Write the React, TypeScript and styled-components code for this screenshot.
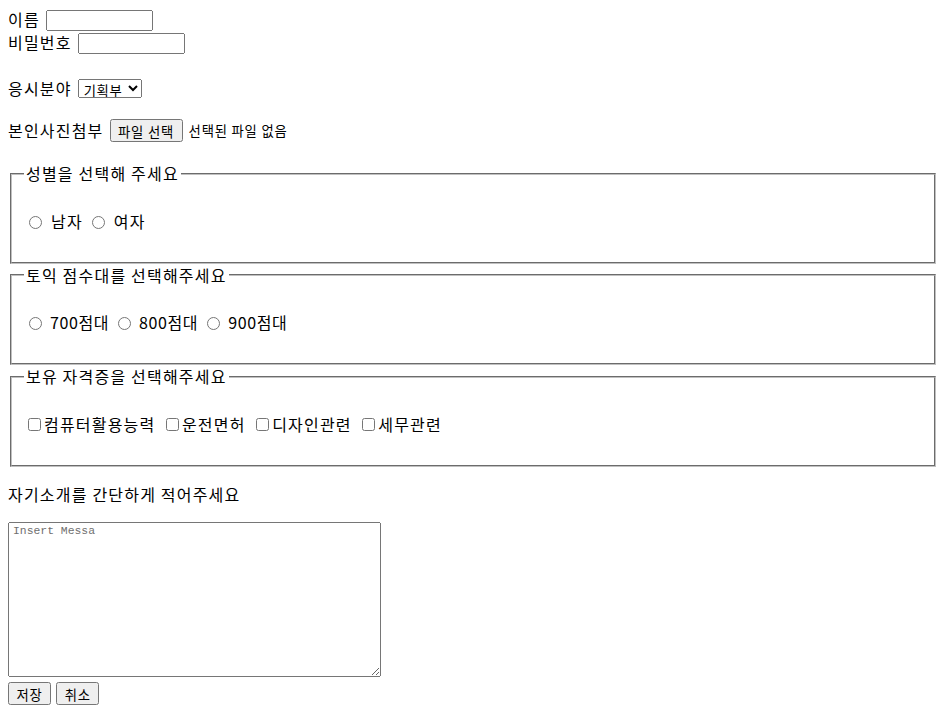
import React from "react";
import styled, { createGlobalStyle } from "styled-components";

const GlobalStyle = createGlobalStyle`
  body {
    margin: 8px;
    font-family: "Noto Sans CJK KR", "Noto Sans", sans-serif;
    font-size: 16px;
    letter-spacing: 1.2px;
    color: #000;
    background: #fff;
  }
`;

const Form = styled.form`
  display: flex;
  flex-direction: column;
`;

const Row = styled.div<{ $top?: number; $h?: number }>`
  display: flex;
  align-items: center;
  gap: 6px;
  height: ${(p) => p.$h ?? 23}px;
  margin-top: ${(p) => p.$top ?? 0}px;
  line-height: 23px;
`;

const TextInput = styled.input`
  box-sizing: border-box;
  width: 107px;
  height: 21px;
  margin: 2px 0 0 0;
  font-family: "Noto Sans CJK KR", sans-serif;
  font-size: 13.33px;
`;

const Select = styled.select`
  box-sizing: border-box;
  width: 64px;
  height: 19px;
  margin: 0;
  padding: 0 0 0 1px;
  font-family: "Noto Sans CJK KR", sans-serif;
  font-size: 13.33px;
  letter-spacing: 0.6px;
  line-height: 17px;
`;

const Button = styled.button`
  box-sizing: border-box;
  height: 23px;
  margin: 0;
  padding: 1px 6.5px;
  font-family: "Noto Sans CJK KR", sans-serif;
  font-size: 13.33px;
  letter-spacing: 0.8px;
  line-height: 19px;
  color: #000;
`;

const FileNote = styled.span`
  font-size: 13.33px;
  letter-spacing: 0.8px;
`;

const Fieldset = styled.fieldset<{ $top?: number }>`
  margin: ${(p) => p.$top ?? 0}px 2px 0 2px;
  padding: 0.35em 0.75em 0.625em;
  border: 2px groove rgb(192, 192, 192);
  min-width: 0;
`;

const Legend = styled.legend`
  padding: 0 2px;
  line-height: 23px;
`;

const Options = styled.div<{ $gap: number }>`
  display: flex;
  align-items: center;
  height: 61px;
  gap: ${(p) => p.$gap}px;
  line-height: 23px;
`;

const Choice = styled.label`
  display: inline-flex;
  align-items: center;
`;

const Radio = styled.input.attrs({ type: "radio" })`
  width: 13px;
  height: 13px;
  margin: 2px 3px 0 5px;
`;

const Check = styled.input.attrs({ type: "checkbox" })`
  width: 13px;
  height: 13px;
  margin: 3px 3px 3px 4px;
`;

const ChoiceText = styled.span<{ $gap?: number; $tight?: boolean }>`
  margin-left: ${(p) => p.$gap ?? 0}px;
  letter-spacing: ${(p) => (p.$tight ? "0.6px" : "inherit")};
`;

const Intro = styled.p`
  margin: 16px 0;
  line-height: 23px;
`;

const TextArea = styled.textarea`
  box-sizing: border-box;
  width: 373px;
  height: 155px;
  margin: 0;
  padding: 2px 4px;
  font-family: "Liberation Mono", monospace;
  font-size: 11.4px;
  letter-spacing: 0;
  &::placeholder {
    color: #6f6f6f;
  }
`;

const Actions = styled.div`
  display: flex;
  gap: 5px;
  margin-top: 5px;
`;

export default function App() {
  return (
    <>
      <GlobalStyle />
      <Form onSubmit={(e) => e.preventDefault()}>
        <Row>
          이름 <TextInput type="text" />
        </Row>
        <Row>
          비밀번호 <TextInput type="text" />
        </Row>
        <Row $top={23}>
          응시분야
          <Select defaultValue="기획부">
            <option>기획부</option>
            <option>영업부</option>
            <option>개발부</option>
          </Select>
        </Row>
        <Row $top={18} $h={24}>
          본인사진첨부
          <Button type="button">파일 선택</Button>
          <FileNote>선택된 파일 없음</FileNote>
        </Row>

        <Fieldset $top={20}>
          <Legend>성별을 선택해 주세요</Legend>
          <Options $gap={4}>
            <Choice>
              <Radio name="gender" />
              <ChoiceText $gap={6}>남자</ChoiceText>
            </Choice>
            <Choice>
              <Radio name="gender" />
              <ChoiceText $gap={6}>여자</ChoiceText>
            </Choice>
          </Options>
        </Fieldset>

        <Fieldset>
          <Legend>토익 점수대를 선택해주세요</Legend>
          <Options $gap={4}>
            <Choice>
              <Radio name="toeic" />
              <ChoiceText $gap={5} $tight>700점대</ChoiceText>
            </Choice>
            <Choice>
              <Radio name="toeic" />
              <ChoiceText $gap={5} $tight>800점대</ChoiceText>
            </Choice>
            <Choice>
              <Radio name="toeic" />
              <ChoiceText $gap={5} $tight>900점대</ChoiceText>
            </Choice>
          </Options>
        </Fieldset>

        <Fieldset>
          <Legend>보유 자격증을 선택해주세요</Legend>
          <Options $gap={6.5}>
            <Choice>
              <Check />
              <ChoiceText>컴퓨터활용능력</ChoiceText>
            </Choice>
            <Choice>
              <Check />
              <ChoiceText>운전면허</ChoiceText>
            </Choice>
            <Choice>
              <Check />
              <ChoiceText>디자인관련</ChoiceText>
            </Choice>
            <Choice>
              <Check />
              <ChoiceText>세무관련</ChoiceText>
            </Choice>
          </Options>
        </Fieldset>

        <Intro>자기소개를 간단하게 적어주세요</Intro>
        <TextArea placeholder="Insert Messa" />
        <Actions>
          <Button type="submit">저장</Button>
          <Button type="reset">취소</Button>
        </Actions>
      </Form>
    </>
  );
}
